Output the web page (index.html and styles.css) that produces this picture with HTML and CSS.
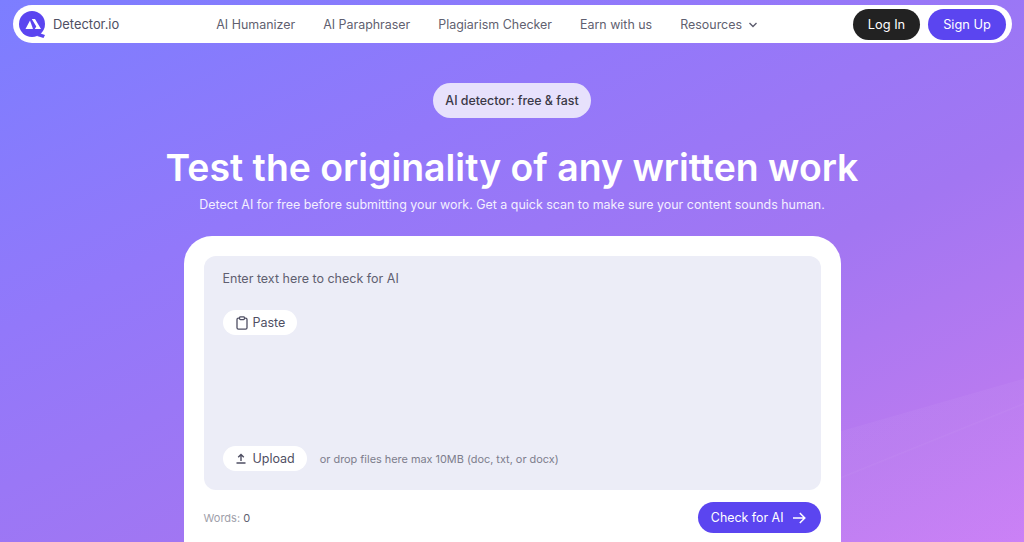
FILE: index.html
```html
<!DOCTYPE html>
<html lang="en">
<head>
    <meta charset="UTF-8">
    <meta name="viewport" content="width=device-width, initial-scale=1.0">
    <title>Detector.io</title>
    <link rel="stylesheet" href="styles.css">
</head>
<body>
    <header class="navbar">
        <a class="brand" href="#">
            <svg class="brand-logo" width="28" height="30" viewBox="0 0 28 30">
                <circle cx="13" cy="13" r="13" fill="#5b45f0" />
                <path d="M20 22 L26 24 L24.5 27 L18 25 Z" fill="#5b45f0" />
                <path d="M6.5 18 L11 9.5 L14 18 Z" fill="#fff" />
                <path d="M12.8 8 H16 L22 18 H15.8 L17.3 15.4 Z" fill="#fff" />
            </svg>
            <span>Detector.io</span>
        </a>
        <nav class="nav-links">
            <a href="#">AI Humanizer</a>
            <a href="#">AI Paraphraser</a>
            <a href="#">Plagiarism Checker</a>
            <a href="#">Earn with us</a>
            <a class="has-caret" href="#">Resources
                <svg width="10" height="6" viewBox="0 0 10 6"><path d="M1.5 1 L5 4.5 L8.5 1" fill="none" stroke="#5c5c6e" stroke-width="1.4" /></svg>
            </a>
        </nav>
        <div class="nav-actions">
            <a class="btn btn-dark" href="#">Log In</a>
            <a class="btn btn-primary" href="#">Sign Up</a>
        </div>
    </header>

    <main class="hero">
        <div class="pill">AI detector: free &amp; fast</div>
        <h1>Test the originality of any written work</h1>
        <p class="lead">Detect AI for free before submitting your work. Get a quick scan to make sure your content sounds human.</p>

        <section class="card">
            <div class="editor">
                <div class="placeholder">Enter text here to check for AI</div>
                <button class="chip chip-paste">
                    <svg width="12" height="14" viewBox="0 0 12 14"><rect x="1" y="2.2" width="10" height="11" rx="1.4" fill="none" stroke="#4f4f63" stroke-width="1.3" /><rect x="3.6" y="0.8" width="4.8" height="2.8" rx="0.8" fill="#fff" stroke="#4f4f63" stroke-width="1.2" /></svg>
                    Paste
                </button>
                <div class="upload-row">
                    <button class="chip chip-upload">
                        <svg width="10" height="11" viewBox="0 0 10 11"><path d="M5 8 V1.5 M2.2 4.2 L5 1.4 L7.8 4.2 M0.5 10 H9.5" fill="none" stroke="#4f4f63" stroke-width="1.4" /></svg>
                        Upload
                    </button>
                    <span class="upload-note">or drop files here max 10MB (doc, txt, or docx)</span>
                </div>
            </div>
            <div class="card-footer">
                <div class="words">Words: <b>0</b></div>
                <button class="check-btn">Check for AI
                    <svg width="14" height="12" viewBox="0 0 14 12"><path d="M1 6 H12.5 M7.8 1 L12.8 6 L7.8 11" fill="none" stroke="#fff" stroke-width="1.5" /></svg>
                </button>
            </div>
        </section>
    </main>
</body>
</html>
```

FILE: styles.css
```css
* {
    box-sizing: border-box;
}
html, body {
    height: 100%;
}
body {
    margin: 0;
    padding-top: 5px;
    overflow: hidden;
    font-family: Inter, "Liberation Sans", sans-serif;
    background-color: #9a78f6;
    background-image:
        linear-gradient(158deg, rgba(255, 255, 255, 0) 85.4%, rgba(255, 255, 255, 0.035) 85.5%, rgba(255, 255, 255, 0) 85.7%),
        linear-gradient(164deg, rgba(255, 255, 255, 0) 80.4%, rgba(255, 255, 255, 0.035) 80.5%),
        linear-gradient(154deg, #7c7eff 0%, #9278fa 32%, #a276f2 62%, #b87af0 84%, #c97cf6 100%);
}
a {
    text-decoration: none;
    color: inherit;
}
.navbar {
    display: flex;
    align-items: center;
    width: 999px;
    height: 38px;
    margin-left: 13px;
    padding: 0 6px;
    background: #fff;
    border-radius: 19px;
}
.brand {
    display: flex;
    align-items: center;
    gap: 6px;
    font-size: 12.9px;
    color: #4f4f63;
}
.brand-logo {
    margin-top: 3px;
}
.nav-links {
    display: flex;
    gap: 28px;
    margin-left: 97px;
    font-size: 12.45px;
    color: #5f5f70;
}
.has-caret svg {
    margin-left: 2px;
    vertical-align: 1px;
}
.nav-actions {
    display: flex;
    gap: 8px;
    margin-left: auto;
}
.btn {
    display: flex;
    align-items: center;
    justify-content: center;
    height: 31px;
    border-radius: 16px;
    font-size: 12.8px;
    color: #fff;
}
.btn-dark {
    width: 67px;
    background: #222;
}
.btn-primary {
    width: 78px;
    background: #5b45f0;
}
.hero {
    display: flex;
    flex-direction: column;
    align-items: center;
    padding-top: 40px;
}
.pill {
    padding: 0 12px;
    height: 35px;
    line-height: 35px;
    border-radius: 18px;
    background: #e7e1fc;
    color: #3a3846;
    font-size: 12.4px;
    font-weight: 500;
}
h1 {
    margin: 28px 0 0;
    color: #fff;
    font-size: 37.4px;
    line-height: 44px;
    font-weight: 600;
}
.lead {
    margin: 6px 0 0;
    color: #f3efff;
    font-size: 12.44px;
    line-height: 18px;
}
.card {
    width: 657px;
    height: 306px;
    margin-top: 22px;
    padding: 20px 20px 0;
    background: #fff;
    border-radius: 28px 28px 0 0;
}
.editor {
    display: flex;
    flex-direction: column;
    align-items: flex-start;
    height: 234px;
    padding: 15px 19px 19px;
    background: #ecedf7;
    border-radius: 12px;
}
.placeholder {
    color: #5f5f70;
    font-size: 12.5px;
    line-height: 16px;
}
.chip {
    display: flex;
    align-items: center;
    gap: 5px;
    height: 25px;
    border: 0;
    border-radius: 13px;
    background: #fff;
    color: #4f4f63;
    font-family: inherit;
    font-size: 12.5px;
}
.chip-paste {
    margin-top: 23px;
    padding: 0 12px 0 13px;
}
.upload-row {
    display: flex;
    align-items: center;
    gap: 13px;
    margin-top: auto;
}
.chip-upload {
    padding: 0 12px 0 13px;
    gap: 7px;
}
.upload-note {
    color: #7d7d8c;
    font-size: 10.9px;
}
.card-footer {
    display: flex;
    align-items: center;
    justify-content: space-between;
    margin-top: 12px;
}
.words {
    color: #a0a0aa;
    font-size: 11px;
}
.words b {
    color: #5f5f70;
    font-weight: 400;
}
.check-btn {
    display: flex;
    align-items: center;
    gap: 8px;
    height: 31px;
    padding: 0 15px 0 13px;
    border: 0;
    border-radius: 16px;
    background: #5b45f0;
    color: #fff;
    font-family: inherit;
    font-size: 12.4px;
}
```
